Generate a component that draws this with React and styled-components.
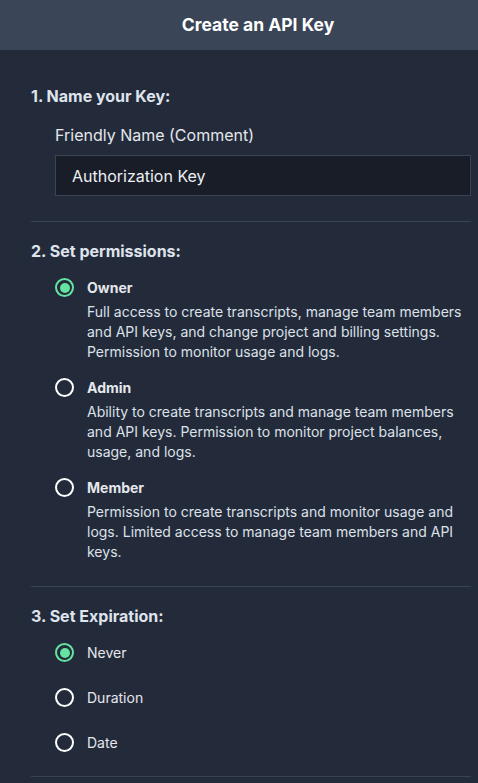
import React from "react";
import styled, { createGlobalStyle } from "styled-components";

const Global = createGlobalStyle`
  html, body { margin: 0; padding: 0; background: #232b3b; }
  body { font-family: Inter, "Noto Sans", sans-serif; -webkit-font-smoothing: antialiased; }
  * { box-sizing: border-box; }
`;

const Page = styled.div`
  width: 478px;
  min-height: 783px;
  background: #232b3b;
  color: #e5e7eb;
`;

const Header = styled.header`
  height: 50px;
  background: #3a4557;
  display: flex;
  align-items: center;
  justify-content: center;
  padding-left: 38px;
`;

const Title = styled.h1`
  margin: 0;
  font-size: 17.5px;
  font-weight: 700;
  color: #ffffff;
  line-height: 22px;
`;

const Body = styled.div`
  padding: 36px 7px 0 31px;
`;

const Section = styled.section`
  border-bottom: 1px solid #374253;
  padding-bottom: ${(p) => p.$pb || 24}px;
  & + & { padding-top: 19px; }
`;

const Heading = styled.h2`
  margin: 0;
  font-size: 16px;
  font-weight: 700;
  line-height: 20px;
  color: #dfe3ec;
`;

const Indent = styled.div`
  padding-left: 24px;
  margin-top: ${(p) => p.$mt || 17}px;
  display: flex;
  flex-direction: column;
  gap: ${(p) => p.$gap || 0}px;
`;

const FieldLabel = styled.label`
  font-size: 16px;
  line-height: 20px;
  color: #e5e7eb;
  margin-bottom: 10px;
`;

const Input = styled.input`
  height: 41px;
  width: 100%;
  background: #181d28;
  border: 1px solid #3a4455;
  color: #eef0f4;
  font-family: Inter, "Noto Sans", sans-serif;
  font-size: 16px;
  padding: 0 16px;
  outline: none;
`;

const Option = styled.div`
  display: grid;
  grid-template-columns: 20px 1fr;
  column-gap: 12px;
  align-items: start;
`;

const Radio = styled.span`
  width: 19px;
  height: 19px;
  margin-top: 0;
  border-radius: 50%;
  border: 2px solid ${(p) => (p.$checked ? "#64e3a1" : "#ffffff")};
  display: flex;
  align-items: center;
  justify-content: center;
  &::after {
    content: "";
    display: ${(p) => (p.$checked ? "block" : "none")};
    width: 10px;
    height: 10px;
    border-radius: 50%;
    background: #64e3a1;
  }
`;

const OptionTitle = styled.div`
  font-size: 14px;
  line-height: 20px;
  font-weight: ${(p) => (p.$bold ? 700 : 400)};
  color: #e5e7eb;
`;

const OptionDesc = styled.p`
  margin: 4px 0 0;
  font-size: 14px;
  line-height: 20px;
  color: #dde1e8;
  grid-column: 2;
`;

const roles = [
  {
    name: "Owner",
    checked: true,
    desc: "Full access to create transcripts, manage team members and API keys, and change project and billing settings. Permission to monitor usage and logs.",
  },
  {
    name: "Admin",
    desc: "Ability to create transcripts and manage team members and API keys. Permission to monitor project balances, usage, and logs.",
  },
  {
    name: "Member",
    desc: "Permission to create transcripts and monitor usage and logs. Limited access to manage team members and API keys.",
  },
];

const expirations = [
  { name: "Never", checked: true },
  { name: "Duration" },
  { name: "Date" },
];

export default function App() {
  return (
    <Page>
      <Global />
      <Header>
        <Title>Create an API Key</Title>
      </Header>
      <Body>
        <Section $pb={25}>
          <Heading>1. Name your Key:</Heading>
          <Indent $mt={19}>
            <FieldLabel>Friendly Name (Comment)</FieldLabel>
            <Input defaultValue="Authorization Key" />
          </Indent>
        </Section>
        <Section>
          <Heading>2. Set permissions:</Heading>
          <Indent $gap={16}>
            {roles.map((r) => (
              <Option key={r.name}>
                <Radio $checked={r.checked} />
                <OptionTitle $bold>{r.name}</OptionTitle>
                <OptionDesc>{r.desc}</OptionDesc>
              </Option>
            ))}
          </Indent>
        </Section>
        <Section $pb={23}>
          <Heading>3. Set Expiration:</Heading>
          <Indent $mt={17} $gap={25}>
            {expirations.map((e) => (
              <Option key={e.name}>
                <Radio $checked={e.checked} />
                <OptionTitle>{e.name}</OptionTitle>
              </Option>
            ))}
          </Indent>
        </Section>
      </Body>
    </Page>
  );
}
